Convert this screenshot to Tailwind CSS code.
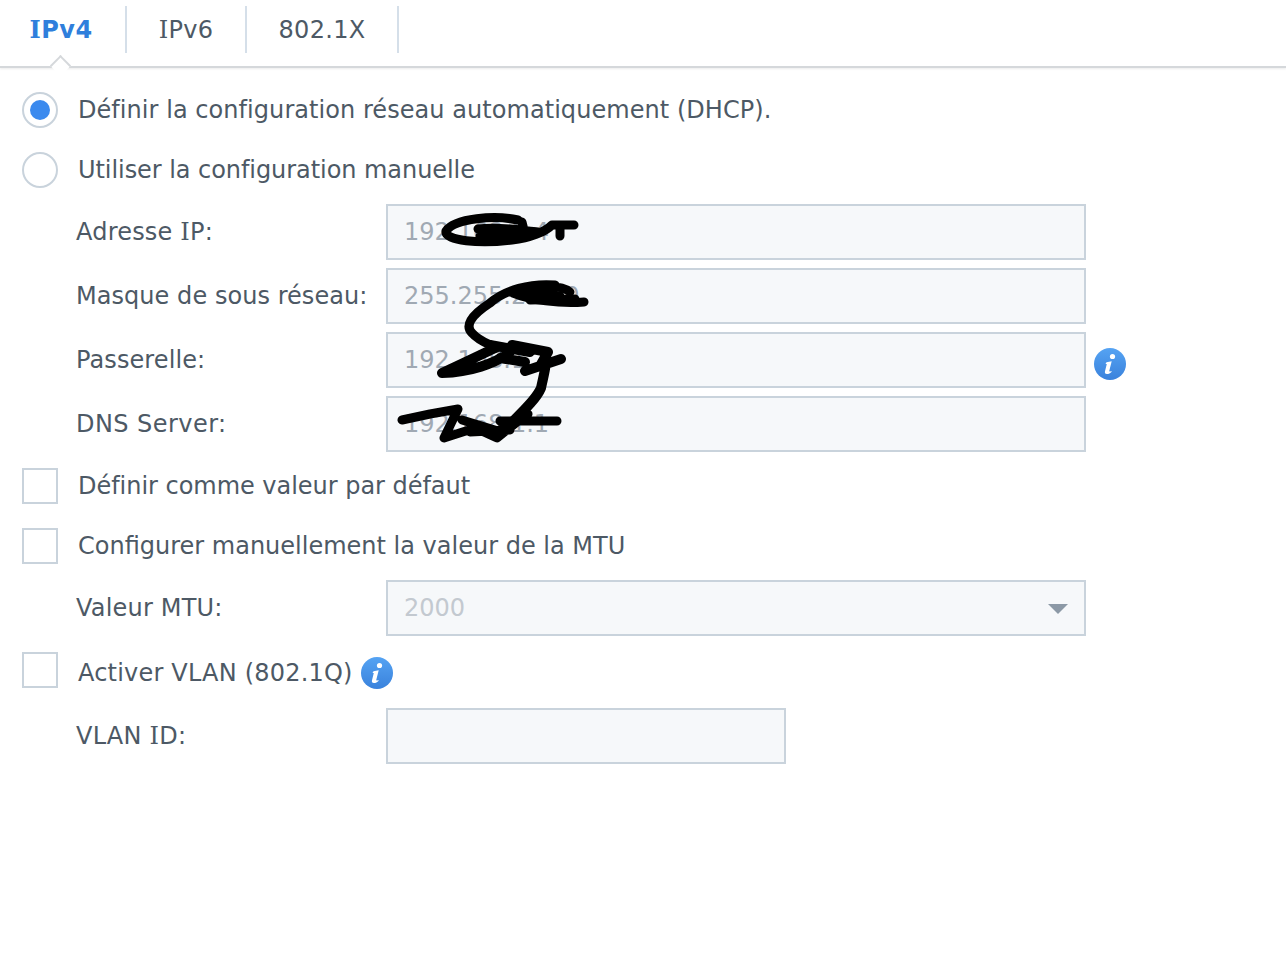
<!doctype html>
<html>
    <head>
        <title>IPv4</title>
        <meta charset="utf-8">
        <script src="https://cdn.jsdelivr.net/npm/@tailwindcss/browser@4"></script>
    </head>
    <body class="relative w-[1286px] h-[974px] overflow-hidden bg-white font-['DejaVu_Sans',sans-serif] text-[24px] text-[#4d5965]">
        <!-- tabs -->
        <div class="relative h-[68px] border-b-2 border-[#d5d8db] shadow-[0_1px_2px_rgba(0,0,0,0.08)] flex items-start pt-[6px]">
            <div class="w-[127px] h-[47px] flex items-center justify-center pr-[3px] font-bold tracking-[0.5px] text-[#2f7fdc] border-r-2 border-[#d5dfe9]"><span><span class="font-['DejaVu_Serif',serif]">I</span>Pv4</span></div>
            <div class="w-[120px] h-[47px] flex items-center justify-center tracking-[0.3px] border-r-2 border-[#d5dfe9]"><span><span class="font-['DejaVu_Serif',serif]">I</span>Pv6</span></div>
            <div class="w-[152px] h-[47px] flex items-center justify-center tracking-[0.3px] border-r-2 border-[#d5dfe9]">802.1X</div>
            <div class="absolute left-[53px] top-[58px] w-[15px] h-[15px] rotate-45 bg-white border-l-2 border-t-2 border-[#d5d8db]"></div>
        </div>
        <form class="pl-[22px] pt-[12px]">
            <label class="h-[60px] flex items-center">
                <span class="w-[36px] h-[36px] rounded-full border-2 border-[#c9d3dc] flex items-center justify-center"><span class="w-[20px] h-[20px] rounded-full bg-[#3b8aee]"></span></span>
                <span class="ml-[20px] tracking-[0.055px]">Définir la configuration réseau automatiquement (DHCP).</span>
            </label>
            <label class="h-[60px] flex items-center">
                <span class="w-[36px] h-[36px] rounded-full border-2 border-[#c9d3dc]"></span>
                <span class="ml-[20px] tracking-[-0.06px]">Utiliser la configuration manuelle</span>
            </label>
            <div class="mt-[4px] flex flex-col gap-[8px]">
                <div class="flex items-center h-[56px]">
                    <span class="w-[364px] pl-[54px] shrink-0 tracking-[0.2px]">Adresse <span class="font-['DejaVu_Serif',serif]">I</span>P:</span>
                    <div class="w-[700px] h-[56px] border-2 border-[#c9d3dc] bg-[#f6f8fa] flex items-center px-[16px] text-[#a0a9b3]">192.168.1.4</div>
                </div>
                <div class="flex items-center h-[56px]">
                    <span class="w-[364px] pl-[54px] shrink-0 tracking-[0.05px]">Masque de sous réseau:</span>
                    <div class="w-[700px] h-[56px] border-2 border-[#c9d3dc] bg-[#f6f8fa] flex items-center px-[16px] text-[#a0a9b3]">255.255.255.0</div>
                </div>
                <div class="flex items-center h-[56px]">
                    <span class="w-[364px] pl-[54px] shrink-0 tracking-[0.1px]">Passerelle:</span>
                    <div class="w-[700px] h-[56px] border-2 border-[#c9d3dc] bg-[#f6f8fa] flex items-center px-[16px] text-[#a0a9b3]">192.168.1.1</div>
                    <svg class="ml-[8px] mt-[8px]" width="32" height="32" viewBox="0 0 32 32"><defs><linearGradient id="a" x1="0" y1="0" x2="0" y2="1"><stop offset="0" stop-color="#55a3f3"/><stop offset="1" stop-color="#3a82dc"/></linearGradient></defs><circle cx="16" cy="16" r="16" fill="url(#a)"/><circle cx="18.500" cy="8.500" r="2.600" fill="#fff"/><path d="M12.500 14.200l5.200-1-2.400 9.600c-.2.800.5 1 1.900.1l.5.8c-1.500 1.500-3 2.300-4.800 2.300-1.800 0-2.300-1.100-1.900-2.700l1.800-7.200-1.300-.2z" fill="#fff"/></svg>
                </div>
                <div class="flex items-center h-[56px]">
                    <span class="w-[364px] pl-[54px] shrink-0 tracking-[0.45px]">DNS Server:</span>
                    <div class="w-[700px] h-[56px] border-2 border-[#c9d3dc] bg-[#f6f8fa] flex items-center px-[16px] text-[#a0a9b3]">192.168.1.1</div>
                </div>
            </div>
            <label class="mt-[4px] h-[60px] flex items-center">
                <span class="w-[36px] h-[36px] border-2 border-[#c9d3dc]"></span>
                <span class="ml-[20px] tracking-[-0.03px]">Définir comme valeur par défaut</span>
            </label>
            <label class="h-[60px] flex items-center">
                <span class="w-[36px] h-[36px] border-2 border-[#c9d3dc]"></span>
                <span class="ml-[20px]">Configurer manuellement la valeur de la MTU</span>
            </label>
            <div class="mt-[4px] flex items-center h-[56px]">
                <span class="w-[364px] pl-[54px] shrink-0 tracking-[0.2px]">Valeur MTU:</span>
                <div class="w-[700px] h-[56px] border-2 border-[#c9d3dc] bg-[#f6f8fa] flex items-center justify-between pl-[16px] pr-[16px] text-[#c3c9d0]">
                    <span>2000</span>
                    <span class="mt-[2px] w-0 h-0 border-x-[10px] border-x-transparent border-t-[10px] border-t-[#8c99a6]"></span>
                </div>
            </div>
            <label class="h-[72px] flex items-center">
                <span class="w-[36px] h-[36px] -mt-[4px] border-2 border-[#c9d3dc]"></span>
                <span class="ml-[20px] mt-[2px] tracking-[0.2px]">Activer VLAN (802.1Q)</span>
                <svg class="ml-[8px] mt-[2px]" width="32" height="32" viewBox="0 0 32 32"><circle cx="16" cy="16" r="16" fill="url(#a)"/><circle cx="18.500" cy="8.500" r="2.600" fill="#fff"/><path d="M12.500 14.200l5.200-1-2.400 9.600c-.2.800.5 1 1.900.1l.5.8c-1.500 1.500-3 2.300-4.800 2.300-1.800 0-2.300-1.100-1.900-2.700l1.800-7.200-1.300-.2z" fill="#fff"/></svg>
            </label>
            <div class="flex items-center h-[56px]">
                <span class="w-[364px] pl-[54px] shrink-0 tracking-[0.25px]">VLAN <span class="font-['DejaVu_Serif',serif]">I</span>D:</span>
                <div class="w-[400px] h-[56px] border-2 border-[#c9d3dc] bg-[#f6f8fa]"></div>
            </div>
        </form>
        <!-- scribbles over the address values -->
        <svg class="absolute left-0 top-0 pointer-events-none" width="1286" height="974" viewBox="0 0 1286 974" fill="none" stroke="#000" stroke-width="9" stroke-linecap="round" stroke-linejoin="round">
            <path d="M518 220C495 215 455 218 446 231C444 241 480 244 512 240C530 238 545 232 552 225L574 225M478 229C500 226 525 231 538 232M480 236L520 237M522 222L524 230M560 226L560 236"/>
            <path d="M584 302C560 304 530 300 513 293C530 286 560 283 570 292M555 285C530 283 505 290 490 303C470 316 465 326 472 333C480 342 490 344 496 348"/>
            <path d="M520 291L560 296M530 300L575 299"/>
            <path stroke-width="10" d="M495 348C470 360 455 367 442 373C470 372 495 364 510 352M490 345L530 352M500 358L525 362M512 345L548 352L540 366M525 371L561 359M546 362C545 372 543 378 541 388C536 400 520 414 510 424"/>
            <path stroke-width="9" d="M402 420L430 414L458 409L444 438L475 428L497 438L522 418M462 420L498 431L528 414M500 421L557 421M470 432L510 430"/>
        </svg>
    </body>
</html>
